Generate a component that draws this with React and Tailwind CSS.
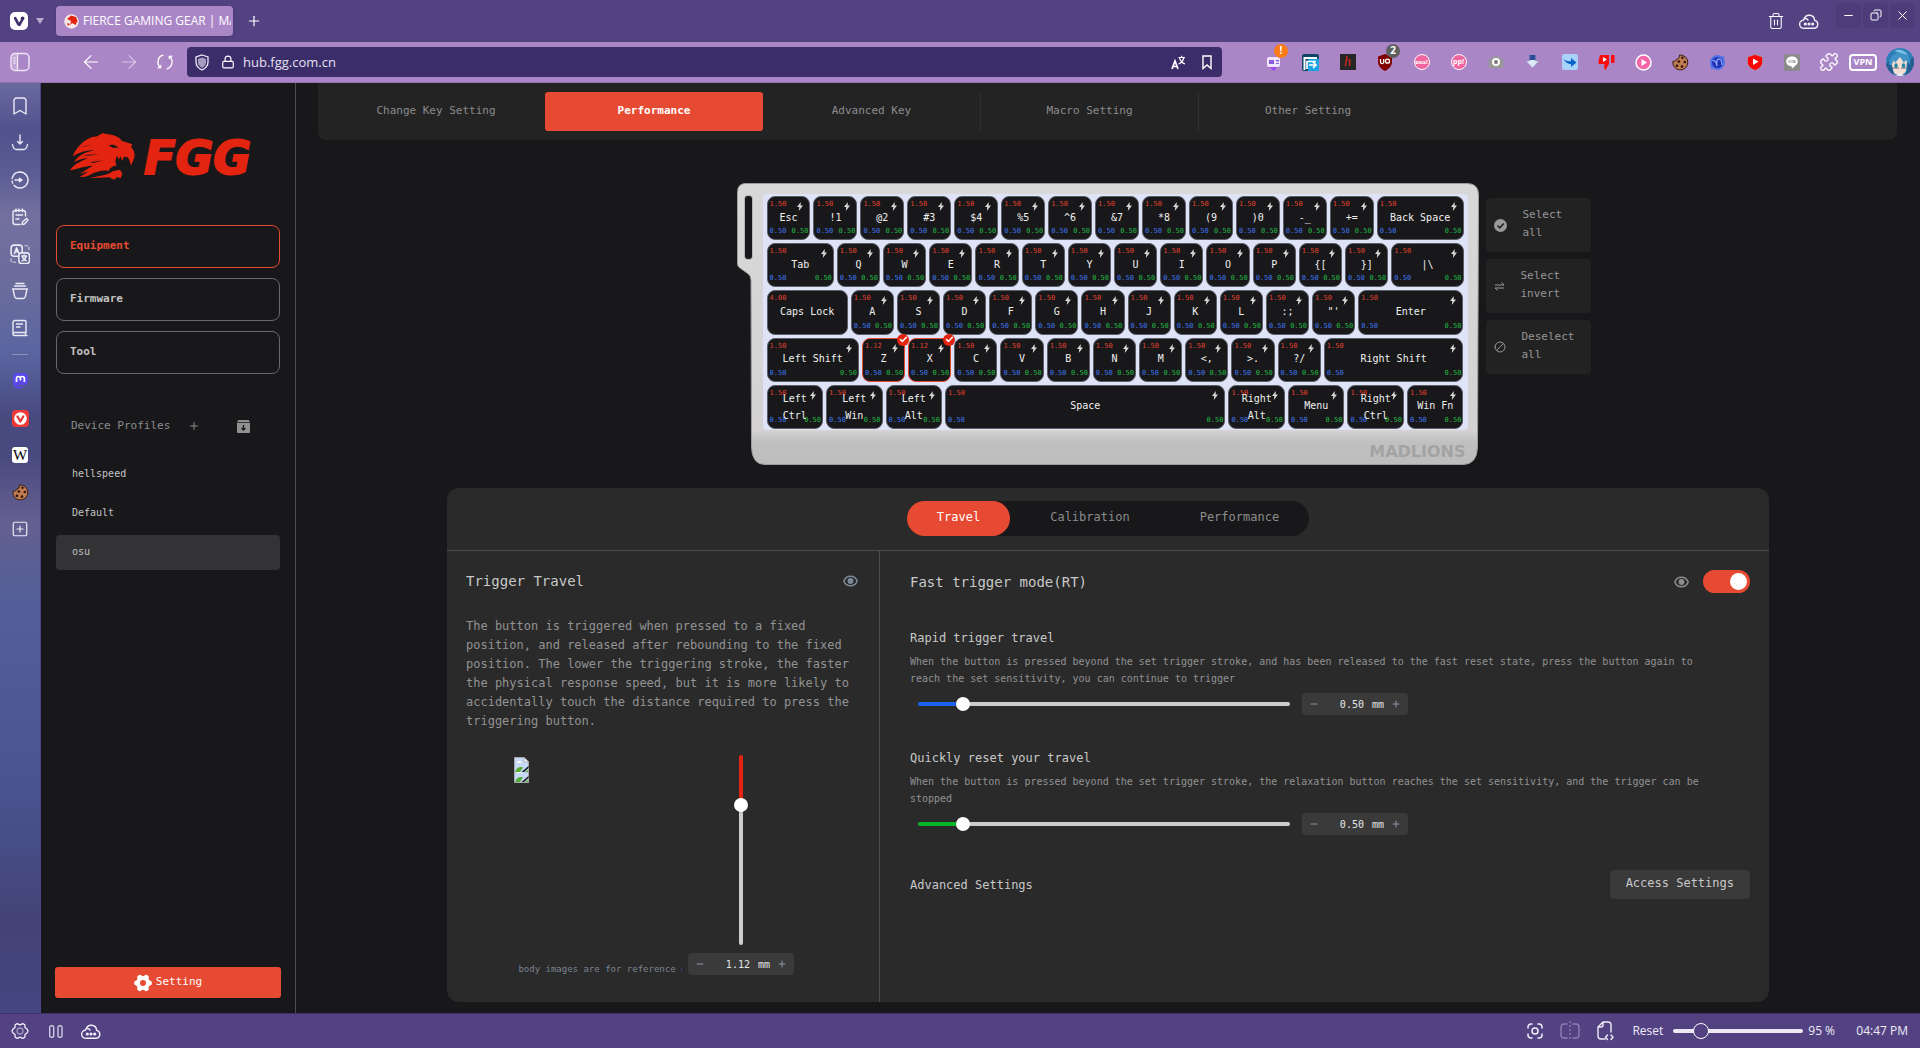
import React from "react";
import {
  Trash2, Plus, Minus, ArrowLeft, ArrowRight, X, Copy, Lock, Bookmark,
  Puzzle, Camera, Check, Ban, SquarePlus,
} from "lucide-react";

const mono = "font-['DejaVu_Sans_Mono',monospace]";

/* ---------- small drawings ---------- */

function VivaldiMark({ bg, fg, size = 18 }) {
  return (
    <svg width={size} height={size} viewBox="0 0 18 18" aria-hidden="true">
      <rect width="18" height="18" rx="5" fill={bg} />
      <path d="M5.2 6.2 8.3 12.2Q9 13.4 9.8 12.2L12.6 7" fill="none" stroke={fg} strokeWidth="2.6" strokeLinecap="round" strokeLinejoin="round" />
      <circle cx="12.6" cy="6.2" r="1.8" fill={fg} />
    </svg>
  );
}

function Cloud() {
  return (
    <svg width="20" height="18" viewBox="0 0 20 18" fill="none" stroke="#f1eefa" strokeWidth="1.4" aria-hidden="true">
      <path d="M5 16.3h10a4 4 0 0 0 .6-7.9A5.4 5.4 0 0 0 5.2 6.6a5 5 0 0 0-.9 1.7A4 4 0 0 0 5 16.3Z" strokeLinejoin="round" />
      <path d="M5.2 6.8c1.4-.5 3 0 3.800 1.200" strokeLinecap="round" />
      <circle cx="6.300" cy="12" r=".9" fill="#fff" /><circle cx="10" cy="12" r=".9" fill="#fff" /><circle cx="13.700" cy="12" r=".9" fill="#fff" />
    </svg>
  );
}

function PanelIcon() {
  return (
    <svg width="20" height="20" viewBox="0 0 20 20" fill="none" stroke="#efe6f7" strokeWidth="1.4" aria-hidden="true">
      <rect x="1" y="1.500" width="18" height="17" rx="4" />
      <path d="M7.500 1.500v17M3.500 6h2M3.500 8.500h2M3.500 11h2" />
      <rect x="1.500" y="2" width="6" height="16" rx="3" fill="#fff" fillOpacity=".25" stroke="none" />
    </svg>
  );
}

function Reload() {
  return (
    <svg width="18" height="18" viewBox="0 0 18 18" fill="none" stroke="#fff" strokeWidth="1.300" strokeLinecap="round" aria-hidden="true">
      <path d="M7 2.200A7 7 0 0 0 4.600 14.400M11 15.800A7 7 0 0 0 13.400 3.600" />
      <path d="M1.800 15H5v-2.800ZM16.200 3H13v2.800Z" fill="#fff" strokeWidth=".6" strokeLinejoin="round" />
    </svg>
  );
}

function TranslateIcon() {
  return (
    <svg width="15" height="15" viewBox="0 0 15 15" fill="none" stroke="#fff" aria-hidden="true">
      <path d="M1 14 4 6l3 8M2 11.500h4" strokeWidth="1.700" />
      <path d="M7.500 2.500H14M10.700.8v1.700M12.800 3C12 6 10 8 7.600 9M8.600 3c.8 3 2.600 5 5.400 6" strokeWidth="1.200" />
    </svg>
  );
}

function CogOutline() {
  return (
    <svg width="18" height="18" viewBox="0 0 18 18" fill="none" stroke="#f1eefa" strokeWidth="1.300" strokeLinejoin="round" aria-hidden="true">
      <path d="M6.200 1.600 9 2.800l2.800-1.200 2 1.200.2 2.700L16 7l1 2-1 2-2 1.500-.2 2.700-2 1.200L9 15.200l-2.800 1.200-2-1.200-.2-2.700L2 11 1 9l1-2 2-1.500.2-2.700Z" />
      <circle cx="9" cy="9" r="3" opacity=".5" />
    </svg>
  );
}

function CogSolid() {
  return (
    <svg width="18" height="18" viewBox="0 0 18 18" aria-hidden="true">
      <circle cx="9" cy="9" r="5" fill="none" stroke="#fff" strokeWidth="4" />
      {[0, 60, 120, 180, 240, 300].map((a) => (
        <circle key={a} cx="15.400" cy="9" r="2.500" fill="#fff" transform={`rotate(${a} 9 9)`} />
      ))}
    </svg>
  );
}

function Eye({ color }) {
  return (
    <svg width="15" height="12" viewBox="0 0 15 12" aria-hidden="true">
      <path d="M.8 6C2 3 4.500 1.200 7.500 1.200S13 3 14.200 6C13 9 10.500 10.800 7.500 10.800S2 9 .8 6Z" fill="none" stroke={color} strokeWidth="1.500" />
      <circle cx="7.500" cy="6" r="2.900" fill={color} />
    </svg>
  );
}

function Bolt() {
  return (
    <svg width="6" height="9" viewBox="0 0 6 9" aria-hidden="true">
      <path d="M3.800 0 0 5h2.300L1.800 9 6 3.600H3.600Z" fill="#d8d8d8" />
    </svg>
  );
}

function CookieIcon() {
  return (
    <svg width="17" height="17" viewBox="0 0 17 17" aria-hidden="true">
      <path d="M7.500 1a7.500 7.500 0 1 1-6.600 6.300c2 .4 3.200-.3 3.400-2.100C6.400 5.300 7.500 4 7.500 1Z" fill="#c07c4e" stroke="#3a2018" strokeWidth="1" />
      <circle cx="10.500" cy="3.800" r="1.200" fill="#2a1610" /><circle cx="6.800" cy="7.600" r="1.300" fill="#2a1610" />
      <circle cx="12.800" cy="8" r="1.300" fill="#2a1610" /><circle cx="5" cy="11.800" r="1.300" fill="#2a1610" /><circle cx="10" cy="12.600" r="1.300" fill="#2a1610" />
    </svg>
  );
}

function BrokenImage() {
  return (
    <svg width="15" height="16" viewBox="0 0 15 16" className="block shrink-0" aria-hidden="true">
      <path d="M.5.500H10L14.500 5V15.500H.5Z" fill="#c6d9f7" stroke="#a5a8ad" />
      <path d="M10 .500V5h4.500Z" fill="#fff" stroke="#a5a8ad" strokeWidth=".8" />
      <path d="M3 6c0-1.500 1-2 2-1.700C6 3.500 7.500 4.500 7.500 6Z" fill="#fff" />
      <path d="M1 15c1-4 5-6 8-4.500L6 15Z" fill="#56ab35" />
      <path d="m7.500 15 7-6v2L10 15Z" fill="#17181a" />
      <path d="M11 15l3-2v2Z" fill="#56ab35" />
    </svg>
  );
}

function Logo() {
  return (
    <svg width="193" height="50" viewBox="0 0 193 50" role="img" aria-label="FGG">
      <g transform="translate(-10 -7) scale(.3333)" fill="#e22410">
        <path d="M38 94C48 70 66 48 96 36L112 34 128 24 138 27C160 28 178 36 186 48L206 54 217 58 213 66C224 76 227 92 220 106L213 122 209 108C207 98 198 93 191 97L187 108 181 94 177 104 171 92 166 108 169 122C158 122 150 128 146 138C130 134 112 140 96 146 88 152 70 158 60 155L84 140C76 141 68 144 58 147L98 122C82 122 58 130 30 136C42 118 62 108 84 100 68 100 56 104 42 112 56 88 78 82 104 76 84 74 60 80 38 94Z" />
        <path d="M88 160 122 152C138 150 148 146 160 138L180 134 187 146 182 160 172 156 162 164 148 157 118 158Z" />
        <path d="M146 60 162 59 176 68 158 68Z" fill="#18181a" />
        <path d="M62 66 96 58 76 64ZM70 90 118 88 84 92ZM90 112 130 106 100 114Z" fill="#18181a" />
        <path d="m180 122 6-12 4 12 10-14-2 20-8 12-8-4Z" fill="#18181a" />
      </g>
      <text x="74" y="42" fontFamily="DejaVu Sans" fontWeight="700" fontStyle="italic" fontSize="46" fill="#e22410" stroke="#e22410" strokeWidth="2">FGG</text>
    </svg>
  );
}

/* ---------- browser frame ---------- */

function TabStrip() {
  return (
    <header className="flex h-[42px] shrink-0 items-center bg-[#524282] pl-[10px] font-['Open_Sans',sans-serif]">
      <button aria-label="Menu" className="flex items-center gap-2">
        <VivaldiMark bg="#fff" fg="#3a2d6a" />
        <svg width="8" height="6" viewBox="0 0 8 6"><path d="M0 0h8L4 6Z" fill="#b5abd1" /></svg>
      </button>
      <button className="ml-3 flex h-[30px] w-[177px] items-center gap-1 rounded bg-[#ab86c7] pl-2 pr-[2px] text-xs text-white shadow">
        <svg width="15" height="15" viewBox="0 0 15 15" className="shrink-0">
          <circle cx="7.500" cy="7.500" r="7.200" fill="#f6e8e8" />
          <path d="M7 1.500 12 3l1.500 4-2 4L8 9 6 11 7 7 3 5Z" fill="#e22410" />
          <path d="M3 9l3 1-2 2Z" fill="#e22410" />
        </svg>
        <span className="overflow-hidden whitespace-nowrap">FIERCE GAMING GEAR | MA</span>
      </button>
      <button aria-label="New tab" className="ml-[13px] text-white"><Plus size={16} strokeWidth={1.8} /></button>
      <div className="ml-auto flex items-center gap-[14px] pr-[5px] text-white">
        <button aria-label="Closed tabs"><Trash2 size={18} strokeWidth={1.4} /></button>
        <button aria-label="Synced tabs"><Cloud /></button>
        <div className="mb-3 ml-[3px] flex gap-[2px]">
          <button aria-label="Minimize" className="flex size-[25px] items-center justify-center rounded bg-[#4c3d7a]"><Minus size={13} strokeWidth={2} /></button>
          <button aria-label="Restore" className="flex size-[25px] items-center justify-center rounded bg-[#4c3d7a]"><Copy size={12} strokeWidth={2} className="-scale-x-100" /></button>
          <button aria-label="Close" className="flex size-[25px] items-center justify-center rounded bg-[#4c3d7a]"><X size={15} strokeWidth={1.6} /></button>
        </div>
      </div>
    </header>
  );
}

function Ext({ label, children }) {
  return <button aria-label={label} className="relative flex size-[17px] items-center justify-center">{children}</button>;
}

function Extensions() {
  return (
    <div className="flex items-center gap-5">
      <Ext label="Video helper">
        <svg width="17" height="17" viewBox="0 0 17 17">
          <rect x="2" y="3" width="13" height="10" rx="2" fill="#f1e6ff" /><path d="M4 13h8l-3 4Z" fill="#9a4cf0" />
          <rect x="4" y="6" width="5" height="4" fill="#8d5be0" /><path d="M11 6h3v1.500h-3ZM11 9h3v1h-3Z" fill="#8d5be0" />
        </svg>
        <span className="absolute -top-[10px] left-[9px] flex size-[14px] items-center justify-center rounded-full bg-[#f97b16] text-[10px] font-bold text-white">!</span>
      </Ext>
      <Ext label="Tab forwarder">
        <svg width="17" height="17" viewBox="0 0 17 17"><rect width="17" height="17" rx="2" fill="#0d4468" /><path d="M6 17V5h11v12Z" fill="#19a5e0" /><path d="M2.500 16V4H15" stroke="#fff" strokeWidth="2" fill="none" /><path d="M5 15V7.500h9M7 11h7m-3-3 3 3-3 3" stroke="#fff" strokeWidth="1.700" fill="none" /></svg>
      </Ext>
      <Ext label="Hypothesis">
        <span className="flex size-4 items-center justify-center bg-[#262626] font-['Liberation_Serif',serif] text-sm italic text-[#e0261f]">h</span>
      </Ext>
      <Ext label="Content blocker">
        <svg width="16" height="17" viewBox="0 0 16 17"><path d="M8 0 15 2.500V8c0 4-3 7-7 9-4-2-7-5-7-9V2.500Z" fill="#800000" /><path d="M3.500 5v3a1.600 1.600 0 0 0 3.200 0V5" stroke="#fff" strokeWidth="1.300" fill="none" /><circle cx="10.500" cy="7.200" r="2" stroke="#fff" strokeWidth="1.300" fill="none" /></svg>
        <span className="absolute -top-[10px] left-[10px] flex size-[14px] items-center justify-center rounded-full bg-[#5f5f5f] text-[10px] font-bold text-white">2</span>
      </Ext>
      <Ext label="osu! stats"><span className="flex size-4 shrink-0 items-center justify-center rounded-full border border-white bg-[#f0659f] text-[6px] font-bold text-white">osu!</span></Ext>
      <Ext label="pp counter"><span className="flex size-4 shrink-0 items-center justify-center rounded-full border border-white bg-[#f0659f] text-[7px] font-bold text-white">pp!</span></Ext>
      <Ext label="Screenshot"><Camera size={16} fill="#979797" stroke="#979797" /><span className="absolute size-2 rounded-full border-2 border-white bg-[#777]" /></Ext>
      <Ext label="Downloader">
        <svg width="13" height="14" viewBox="0 0 13 14"><path d="M3.500 0h6v6H13L6.500 13 0 6h3.500Z" fill="#dfe8f5" stroke="#8a93b5" strokeWidth=".6" /><path d="M3.500 0h6v5h-6Z" fill="#2c4a9a" /></svg>
      </Ext>
      <Ext label="Redirector">
        <svg width="16" height="16" viewBox="0 0 16 16"><rect width="16" height="16" rx="2" fill="#a9d2fb" /><path d="M2 5c2 2 4 2.500 7 2V4l5.500 4.500L9 13v-3C6 10 3 8.500 2 5Z" fill="#0a63c9" /></svg>
      </Ext>
      <Ext label="Dislike counter">
        <svg width="17" height="16" viewBox="0 0 17 16"><path d="M2 1h9v9L7.500 16Q5.500 15 6.500 10H0.500Q0 8 2 1ZM13 1h3.500v8H13Z" fill="#fb0d0d" /><path d="m5 3 4 2.500L5 8Z" fill="#fff" /></svg>
      </Ext>
      <Ext label="Player">
        <svg width="17" height="17" viewBox="0 0 17 17"><circle cx="8.500" cy="8.500" r="7.500" fill="#f566a8" stroke="#fff" strokeWidth="1.500" /><path d="m6.500 5 5.500 3.500L6.500 12Z" fill="#fff" /></svg>
      </Ext>
      <Ext label="Cookies"><CookieIcon /></Ext>
      <Ext label="Violentmonkey">
        <svg width="17" height="17" viewBox="0 0 17 17"><circle cx="8.500" cy="8.500" r="6.500" fill="#2230b8" stroke="#4f74e3" strokeWidth="2" /><path d="M3.500 7q3-2 4.500 5M8 12q-1-7 2-7t3 6" stroke="#8aa6f5" strokeWidth="1.300" fill="none" /><path d="M14 1.500l2 3-3.500.5ZM3 15.500l-2-3 3.500-.5Z" fill="#4f74e3" /></svg>
      </Ext>
      <Ext label="Sponsor blocker">
        <svg width="16" height="17" viewBox="0 0 16 17"><path d="M8 .5 15.500 3v5c0 4-3.500 7-7.500 8.500C4 15 .5 12 .5 8V3Z" fill="#f80505" stroke="#a9a9a9" strokeWidth=".6" /><path d="m6 4.500 5.500 3.200L6 11Z" fill="#fff" /></svg>
      </Ext>
      <Ext label="LINE">
        <svg width="16" height="17" viewBox="0 0 16 17"><rect width="16" height="17" rx="2" fill="#8a8a8a" /><path d="M8 2.500c3.300 0 5.800 2 5.800 4.900 0 2.500-2 4.100-5.800 7-.3-1 0-1.800-.8-2.100C4 12 2.200 10 2.200 7.400 2.200 4.500 4.700 2.500 8 2.500Z" fill="#fff" /><path d="M5 6v3M7 6v3M9 9V6l2 3V6" stroke="#8a8a8a" strokeWidth=".8" fill="none" /></svg>
      </Ext>
      <Ext label="Extensions"><Puzzle size={20} strokeWidth={1.6} className="shrink-0 text-white" /></Ext>
    </div>
  );
}

function AddressBar() {
  return (
    <div className="flex h-[41px] shrink-0 items-center border-b border-[#9471b3] bg-[#ab86c7] pl-[10px] pr-[6px] font-['Open_Sans',sans-serif]">
      <button aria-label="Panel"><PanelIcon /></button>
      <button aria-label="Back" className="ml-[50px] text-white"><ArrowLeft size={22} strokeWidth={1.300} /></button>
      <button aria-label="Forward" className="ml-4 text-white/50"><ArrowRight size={22} strokeWidth={1.300} /></button>
      <button aria-label="Reload" className="ml-4"><Reload /></button>
      <div className="ml-[13px] flex h-[30px] flex-1 items-center rounded bg-[#3a2d6a] px-2 text-white">
        <svg width="14" height="17" viewBox="0 0 14 17"><path d="M7 1 13 3v5c0 4-3 6.500-6 8-3-1.500-6-4-6-8V3Z" fill="none" stroke="#efecf7" strokeWidth="1.300" /><path d="M7 3.500 11 5v3.500c0 2-1.500 4-4 5.500-2.500-1.500-4-3.500-4-5.500V5Z" fill="#a49dc1" /></svg>
        <Lock size={14} strokeWidth={2} className="ml-[12px]" />
        <input aria-label="Address" defaultValue="hub.fgg.com.cn" className="ml-2 min-w-0 flex-1 bg-transparent pt-px text-[13px] text-[#e4e0f0] outline-none" />
        <TranslateIcon />
        <svg width="10" height="15" viewBox="0 0 10 15" className="ml-4 mr-[2px]"><path d="M1 1h8v12.500L5 10l-4 3.500Z" fill="none" stroke="#fff" strokeWidth="1.400" /></svg>
      </div>
      <div className="ml-[43px]"><Extensions /></div>
      <button className="ml-3 flex h-[17px] w-7 items-center justify-center rounded border-2 border-white text-[9px] font-bold text-white">VPN</button>
      <button aria-label="Profile" className="ml-[9px]">
        <svg width="28" height="28" viewBox="0 0 28 28">
          <defs><clipPath id="av"><circle cx="14" cy="14" r="14" /></clipPath></defs>
          <g clipPath="url(#av)">
            <rect width="28" height="28" fill="#2d7fb8" />
            <path d="M5 13c3-1 6-4 9-5 2 3 5 4 7 5l-1 10c-2 5-10 5-13 1Z" fill="#f4ddd2" />
            <path d="M0 28V16l5-4 2 10 2 6ZM28 28V8l-6 6-1 9-2 5Z" fill="#245f8f" />
            <path d="M3 16C4 8 9 5 13 4c6-1 12 3 11 13l-4-6-2 4-4-6-5 6-1-3-3 6Z" fill="#3f93c6" />
            <path d="M8 3q8-4 14 4l-4-1Z" fill="#7cc0e2" />
            <ellipse cx="10" cy="17.500" rx="1.700" ry="2.200" fill="#1f86a8" /><ellipse cx="17.500" cy="17.500" rx="1.700" ry="2.200" fill="#1f86a8" />
            <path d="M7 20h6M15 20h5" stroke="#444b5a" strokeWidth=".8" />
            <path d="M9 28l5-3 5 3Z" fill="#e9eef5" />
          </g>
        </svg>
      </button>
    </div>
  );
}

function PanelStrip() {
  const s = { width: 18, height: 18, viewBox: "0 0 18 18", fill: "none", stroke: "#eceaf6", strokeWidth: 1.4, strokeLinecap: "round", strokeLinejoin: "round" };
  const items = [
    ["Bookmarks", <svg {...s}><path d="M3 3.500A2.500 2.500 0 0 1 5.500 1h7A2.500 2.500 0 0 1 15 3.500V17l-6-3.500L3 17Z" /></svg>],
    ["Downloads", <svg {...s}><path d="M9 1v9M6.500 7.500 9 10l2.500-2.500M1.500 10.500c.5 3 2 5 4 5h7c2 0 3.500-2 4-5" /></svg>],
    ["History", <svg {...s}><path d="M9 1a8 8 0 1 1-4.500 14.600" /><path d="M4.500 15.600A8 8 0 0 1 9 1" strokeDasharray="2 2.500 2 2.500 20" /><path d="M4 9h7M8.500 7.300 11 9l-2.500 1.700Z" /></svg>],
    ["Notes", <svg {...s}><path d="M14.500 8V5A2.500 2.500 0 0 0 12 2.500H4.500A2.500 2.500 0 0 0 2 5v9a2.500 2.500 0 0 0 2.500 2.500H9M5 1v2.500M8 1v2.500M11.500 1v2.500M5 7h6.500M5 11h3M11 16.500l.5-2.500 4-3.500 1.500 1.500-3.500 4Z" /></svg>],
    ["Translate", <svg {...s} width="20" height="20" className="shrink-0"><rect x="1" y="1" width="10" height="10" rx="2.500" /><path d="M4 8.500 6 3.500l2 5M4.700 7h2.600" /><rect x="8" y="8" width="9.500" height="9.500" rx="2.500" fill="#5d6093" /><path d="M10.500 10.800h4.500M12.700 10v1M14.500 11c-.5 2-2 3.500-3.700 4.200M11.300 12c.7 1.500 2 2.500 3.300 3.200" /><path d="M13.500 1.500h2A1.500 1.500 0 0 1 17 3v2.500M1 13.500V15a1.500 1.500 0 0 0 1.500 1.500H5" strokeDasharray="2 2" opacity=".6" /></svg>],
    ["Sessions", <svg {...s}><path d="M5 1.500h8M3.500 4h11M1.500 7h15M2 7l1.500 7a3 3 0 0 0 3 2.500h5a3 3 0 0 0 3-2.500L16 7" /></svg>],
    ["Reading list", <svg {...s}><path d="M2 14.500V3.500A2 2 0 0 1 4 1.500h9.500A1.500 1.500 0 0 1 15 3v10.500H4a2 2 0 0 0-2 2M2 15a1.500 1.500 0 0 0 1.500 1.500H16M14.500 14v2.500M5.500 5h6M5.500 8h3.500" /></svg>],
  ];
  return (
    <nav aria-label="Panels" className="flex w-[41px] shrink-0 flex-col items-center gap-[19px] border-r border-[#4a4680] bg-[linear-gradient(#6a6aa0_0,#50528c_5%,#5b5d94_10%,#73709f_14%,#6a6c9c_22%,#5a65a0_29%,#47497f_36%,#48497f_40%,#655f90_47%,#525f98_56%,#4a5590_75%,#434378_90%,#454680_100%)] pt-[14px]">
      {items.map(([label, icon]) => (
        <button key={label} aria-label={label} className="flex size-[18px] items-center justify-center">{icon}</button>
      ))}
      <hr className="-my-[2px] h-px w-4 border-0 bg-[#8f8fba]" />
      <button aria-label="Mastodon" className="flex size-[18px] items-center justify-center">
        <svg width="15" height="16" viewBox="0 0 15 16"><path d="M3 0h9q3 0 3 3.500V8q0 4-4 4H5q0 2 5 1.500V15q-7 2-9-2Q0 11 0 4 0 0 3 0Z" fill="#5c48e8" /><path d="M3.500 9V5.500Q3.500 3.500 5.400 3.500T7.400 5.500V7.500 5.500Q7.400 3.500 9.400 3.500t2 2V9" stroke="#fff" strokeWidth="1.700" fill="none" /></svg>
      </button>
      <button aria-label="Vivaldi" className="flex size-[18px] items-center justify-center">
        <svg width="17" height="17" viewBox="0 0 17 17"><rect width="17" height="17" rx="4" fill="#ef3939" /><circle cx="8.500" cy="8.500" r="6.300" fill="#fff" /><path d="m5.500 6.500 2.800 5 2.900-5" stroke="#e33" strokeWidth="2.200" fill="none" strokeLinecap="round" strokeLinejoin="round" /></svg>
      </button>
      <button aria-label="Wikipedia" className="flex size-[18px] items-center justify-center"><span className="flex size-4 items-center justify-center rounded-[3px] bg-white font-['Liberation_Serif',serif] text-[15px] text-black">W</span></button>
      <button aria-label="Cookie panel" className="flex size-[18px] items-center justify-center"><CookieIcon /></button>
      <button aria-label="Add web panel" className="flex size-[18px] items-center justify-center text-[#eceaf6]"><SquarePlus size={18} strokeWidth={1.600} /></button>
    </nav>
  );
}

function StatusBar() {
  return (
    <footer className="flex h-[35px] shrink-0 items-center border-t border-[#3d2f6c] bg-[#524282] pl-[11px] pr-3 font-['Open_Sans',sans-serif] text-xs text-[#efecf7]">
      <button aria-label="Settings"><CogOutline /></button>
      <button aria-label="Pause" className="ml-5">
        <svg width="14" height="13" viewBox="0 0 14 13" fill="none" stroke="#d0c9e4" strokeWidth="1.400"><rect x=".7" y=".7" width="4" height="11.600" rx="1.500" /><rect x="9" y=".7" width="4" height="11.600" rx="1.500" /></svg>
      </button>
      <button aria-label="Sync" className="ml-[18px]"><Cloud /></button>
      <div className="ml-auto flex items-center">
        <button aria-label="Capture page">
          <svg width="16" height="16" viewBox="0 0 16 16" fill="none" stroke="#efecf7" strokeWidth="1.500" strokeLinecap="round"><path d="M1 5V4a3 3 0 0 1 3-3h1M11 1h1a3 3 0 0 1 3 3v1M15 11v1a3 3 0 0 1-3 3h-1M5 15H4a3 3 0 0 1-3-3v-1" /><circle cx="8" cy="8" r="3" /></svg>
        </button>
        <button aria-label="Tile tabs" className="ml-[17px]">
          <svg width="20" height="20" viewBox="0 0 20 20" fill="none" stroke="#8d80b3" strokeWidth="1.400"><path d="M7.500 3H4a3 3 0 0 0-3 3v8a3 3 0 0 0 3 3h3.500M12.500 3H16a3 3 0 0 1 3 3v8a3 3 0 0 1-3 3h-3.500" /><path d="M10 0v20" strokeDasharray="2 2" /></svg>
        </button>
        <button aria-label="Page actions" className="ml-[17px]">
          <svg width="17" height="20" viewBox="0 0 17 20" fill="none" stroke="#efecf7" strokeWidth="1.400" strokeLinecap="round" strokeLinejoin="round"><path d="M8 18H4a3 3 0 0 1-3-3V6l5-5h5a3 3 0 0 1 3 3v7M6 1v3a2 2 0 0 1-2 2H1" /><path d="m10.500 14-2 2.200 2 2.300M14 14l2 2.200-2 2.300" /></svg>
        </button>
        <button className="ml-[18px]">Reset</button>
        <input type="range" aria-label="Page zoom" min="20" max="500" defaultValue="102"
          className="ml-[10px] h-1 w-[130px] appearance-none rounded-full bg-[#ece9f4] [&::-webkit-slider-thumb]:size-4 [&::-webkit-slider-thumb]:appearance-none [&::-webkit-slider-thumb]:rounded-full [&::-webkit-slider-thumb]:border [&::-webkit-slider-thumb]:border-white [&::-webkit-slider-thumb]:bg-[#524282]" />
        <span className="ml-[5px] w-12">95 %</span>
        <span>04:47 PM</span>
      </div>
    </footer>
  );
}

/* ---------- device hub ---------- */

function Sidebar() {
  return (
    <aside className="flex w-[255px] shrink-0 flex-col border-r border-[#4c4c4e] px-[14px] text-[11px] text-[#c2c2c2]">
      <div className="mt-[49px] px-[15px]"><Logo /></div>
      <nav className="mx-px mt-[43px] flex flex-col gap-[10px] font-bold">
        <button className="h-[43px] rounded-lg border border-[#e64a33] px-[13px] text-left text-[#e64a33]">Equipment</button>
        <button className="h-[43px] rounded-lg border border-[#6a6a6c] px-[13px] text-left">Firmware</button>
        <button className="h-[43px] rounded-lg border border-[#6a6a6c] px-[13px] text-left">Tool</button>
      </nav>
      <div className="mt-11 flex items-center px-4 text-[#8c8c8d]">
        <h2>Device Profiles</h2>
        <button aria-label="Add profile" className="ml-[18px]"><Plus size={12} strokeWidth={2} /></button>
        <button aria-label="Import profile" className="ml-auto mr-[15px]">
          <svg width="13" height="13" viewBox="0 0 13 13"><path d="M1.500 0h10L13 2H0ZM0 2.700h13V12a1 1 0 0 1-1 1H1a1 1 0 0 1-1-1Z" fill="#919192" /><path d="M6.500 5v5M4.500 8l2 2 2-2" stroke="#18181a" strokeWidth="1.300" fill="none" /></svg>
        </button>
      </div>
      <ul className="mx-px mt-[22px] flex flex-col gap-1 text-[10px]">
        {["hellspeed", "Default", "osu"].map((p) => (
          <li key={p}>
            <button className={`h-[35px] w-full rounded px-4 pb-[2px] text-left ${p === "osu" ? "bg-[#333335]" : ""}`}>{p}</button>
          </li>
        ))}
      </ul>
      <button className="mb-[15px] mt-auto flex h-[31px] items-center justify-center gap-1 rounded-[3px] bg-[#e64a33] text-white">
        <CogSolid /><span>Setting</span>
      </button>
    </aside>
  );
}

const rows = [
  [["Esc", 44], ["!1", 44], ["@2", 44], ["#3", 44], ["$4", 44], ["%5", 44], ["^6", 44], ["&7", 44], ["*8", 44], ["(9", 44], [")0", 44], ["-_", 44], ["+=", 44], ["Back Space", 87]],
  [["Tab", 67], ["Q", 43], ["W", 43], ["E", 43], ["R", 43], ["T", 43], ["Y", 43], ["U", 43], ["I", 43], ["O", 43], ["P", 43], ["{[", 43], ["}]", 43], ["|\\", 72]],
  [["Caps Lock", 81], ["A", 43], ["S", 43], ["D", 43], ["F", 43], ["G", 43], ["H", 43], ["J", 43], ["K", 43], ["L", 43], [":;", 43], ["\"'", 43], ["Enter", 105]],
  [["Left Shift", 92], ["Z", 43], ["X", 43], ["C", 43], ["V", 43], ["B", 43], ["N", 43], ["M", 43], ["<,", 43], [">.", 43], ["?/", 43], ["Right Shift", 139]],
  [["Left Ctrl", 57], ["Left Win", 57], ["Left Alt", 57], ["Space", 283], ["Right Alt", 57], ["Menu", 57], ["Right Ctrl", 57], ["Win Fn", 57]],
];

function Key({ label, units }) {
  const selected = label === "Z" || label === "X";
  const caps = label === "Caps Lock";
  const stacked = /^(Left|Right) (Ctrl|Win|Alt)$/.test(label);
  /* the border already takes two of the units */
  return (
    <button
      style={{ flexGrow: units - 2 }}
      className={`relative flex min-w-0 basis-0 items-center justify-center rounded-lg border bg-[#18181a] text-[10px] text-[#f0f0f0] ${selected ? "border-[#e64a33]" : "border-[#5b5e66]"}`}
    >
      <span className="absolute left-[2px] top-[3px] text-[7px] leading-[8px] text-[#e0402d]">{caps ? "4.00" : selected ? "1.12" : "1.50"}</span>
      {!caps && (
        <>
          <span className="absolute right-[6px] top-[5px]"><Bolt /></span>
          <span className="absolute bottom-[4px] left-[2px] text-[7px] leading-[8px] text-[#3f74ee]">0.50</span>
          <span className="absolute bottom-[4px] right-[1px] text-[7px] leading-[8px] text-[#22b544]">0.50</span>
        </>
      )}
      <span className={`relative ${stacked ? "w-9 leading-[17px]" : "whitespace-nowrap pb-[2px]"}`}>{label}</span>
      {selected && (
        <span className="absolute -right-[5px] -top-[5px] z-10 flex size-3 items-center justify-center rounded-full bg-[#e22410] text-white"><Check size={9} strokeWidth={4} /></span>
      )}
    </button>
  );
}

function Keyboard() {
  return (
    <section aria-label="Keyboard" className="relative h-[282px] w-[742px] pl-[26px] pr-[11px] pt-[11px]">
      <svg className="absolute inset-0" width="742" height="282" viewBox="0 0 742 282" aria-hidden="true">
        <defs>
          <linearGradient id="case" x1="0" y1="0" x2="0" y2="1">
            <stop offset="0" stopColor="#d8d8d8" /><stop offset=".88" stopColor="#d4d2d3" /><stop offset=".92" stopColor="#c0c0c0" /><stop offset="1" stopColor="#bdbdbd" />
          </linearGradient>
        </defs>
        <path d="M9 .5H730Q741.500 .5 741.500 12L740.500 264Q740 281.500 726 281.500H28Q15 281.500 14.500 264L14 97Q14 92 10 90L3 85Q.5 84 .5 80V9Q.5 .5 9 .5Z" fill="url(#case)" stroke="#9d9d9f" strokeWidth="1" />
        <rect x="8" y="13" width="7" height="63" rx="3" fill="#18181a" stroke="#b5b5b7" strokeWidth="2" paintOrder="stroke" />
      </svg>
      <div className="relative flex h-[236px] flex-col gap-[3px] rounded bg-[#dfe3f8] px-1 pb-px pt-[2px]">
        {rows.map((r, i) => (
          <div key={i} className="flex flex-1 gap-[3px]">
            {r.map(([label, units]) => <Key key={label} label={label} units={units} />)}
          </div>
        ))}
      </div>
      <p className="relative pr-[2px] pt-3 text-right font-['DejaVu_Sans',sans-serif] text-[16px] font-bold leading-[20px] text-[#a3a3a3]">MADLIONS</p>
    </section>
  );
}

function SelectButtons() {
  return (
    <div className="ml-[7px] mt-[15px] flex w-[105px] flex-col gap-[7px] text-[11px] text-[#959596]">
      <button className="flex h-[54px] items-center gap-4 rounded-sm bg-[#222223] px-2 text-left leading-[18px]">
        <svg width="13" height="13" viewBox="0 0 13 13" className="shrink-0"><circle cx="6.500" cy="6.500" r="6.500" fill="#9a9a9b" /><path d="m3.500 6.500 2.300 2.300 4-4.300" stroke="#222223" strokeWidth="1.500" fill="none" /></svg>
        <span className="w-12 pb-[2px]">Select all</span>
      </button>
      <button className="flex h-[54px] items-center gap-4 rounded-sm bg-[#222223] px-2 text-left leading-[18px]">
        <svg width="11" height="13" viewBox="0 0 11 13" className="shrink-0" fill="none" stroke="#9a9a9b" strokeWidth="1"><path d="M1 5h9L7.500 2.500M10 8H1l2.500 2.500" /></svg>
        <span className="w-12 pb-[2px]">Select invert</span>
      </button>
      <button className="flex h-[54px] items-center gap-4 rounded-sm bg-[#222223] px-2 text-left leading-[18px]">
        <Ban size={12} strokeWidth={2} className="shrink-0 -scale-x-100" />
        <span className="w-14 pb-[2px]">Deselect all</span>
      </button>
    </div>
  );
}

function Stepper({ label, value }) {
  return (
    <div className="flex h-[22px] w-[106px] shrink-0 items-center rounded-sm bg-[#3a3a3b] px-[7px] text-[10px] text-[#e6e6e6]">
      <button aria-label={`Decrease ${label}`} className="text-[#8b95a3]"><Minus size={10} strokeWidth={2.500} /></button>
      <input aria-label={label} defaultValue={value} className="min-w-0 flex-1 bg-transparent text-right outline-none" />
      <span className="ml-2">mm</span>
      <button aria-label={`Increase ${label}`} className="ml-[7px] text-[#8b95a3]"><Plus size={10} strokeWidth={2.500} /></button>
    </div>
  );
}

const thumb = "[&::-webkit-slider-thumb]:size-[14px] [&::-webkit-slider-thumb]:appearance-none [&::-webkit-slider-thumb]:rounded-full [&::-webkit-slider-thumb]:bg-white [&::-webkit-slider-thumb]:shadow";

function TravelSetting({ title, text, color, value }) {
  return (
    <section className="flex flex-col">
      <h3 className="text-xs leading-[18px] text-[#c8c8c8]">{title}</h3>
      <p className="mt-[6px] pr-10 text-[10px] leading-[17px] text-[#929293]">{text}</p>
      <div className="mt-[6px] flex items-center pl-2">
        <input type="range" aria-label={title} min="0" max="4.7" step="0.01" defaultValue={value}
          style={{ backgroundImage: `linear-gradient(to right, ${color} 12%, #cdcdcd 12%)` }}
          className={`mr-3 h-1 w-[372px] appearance-none rounded-sm ${thumb}`} />
        <Stepper label={title + " value"} value={value} />
      </div>
    </section>
  );
}

function Panel() {
  return (
    <section className="mb-[11px] ml-[129px] mr-32 mt-[23px] flex flex-1 flex-col rounded-xl bg-[#2a2a2a]">
      <div className="flex h-[63px] items-start justify-center border-b border-[#4c4c4d] pt-[13px]">
        <div className="flex gap-[10px] rounded-full bg-[#18181a] text-xs text-[#8c8c8d]">
          <button className="h-[35px] rounded-full bg-[#e64a33] px-[30px] pb-1 text-white">Travel</button>
          <button className="h-[35px] rounded-full px-[30px] pb-1">Calibration</button>
          <button className="h-[35px] rounded-full px-[30px] pb-1">Performance</button>
        </div>
      </div>
      <div className="grid flex-1 grid-cols-[433px_1fr]">
        <div className="flex flex-col border-r border-[#4c4c4d] px-[19px] pt-5">
          <div className="flex items-center justify-between pr-[2px]">
            <h2 className="text-sm text-[#c8c8c8]">Trigger Travel</h2>
            <button aria-label="Preview trigger travel"><Eye color="#7d8a9a" /></button>
          </div>
          <p className="mt-[26px] text-xs leading-[19px] text-[#929293]">
            The button is triggered when pressed to a fixed position, and released after rebounding to the fixed position. The lower the triggering stroke, the faster the physical response speed, but it is more likely to accidentally touch the distance required to press the triggering button.
          </p>
          <div className="ml-[46px] mt-6 flex gap-[6px]">
            <div className="flex w-[170px] flex-col justify-between pt-[2px]">
              <div className="pl-[2px]">
                <div className="h-[15px] overflow-hidden"><BrokenImage /></div>
                <div className="flex h-[11px] items-end overflow-hidden"><BrokenImage /></div>
              </div>
              <p className="flex justify-center overflow-hidden whitespace-nowrap text-[9px] leading-[12px] text-[#7a838f]">
                <span>s body images are for reference o</span>
              </p>
            </div>
            <div className="flex flex-col items-center gap-2">
              <input type="range" aria-label="Trigger travel" min="0" max="4.54" step="0.01" defaultValue="1.12"
                style={{ backgroundImage: "linear-gradient(to bottom, #e22410 26%, #cdcdcd 26%)" }}
                className={`h-[190px] w-1 appearance-none rounded-sm [writing-mode:vertical-lr] ${thumb}`} />
              <Stepper label="Trigger travel value" value="1.12" />
            </div>
          </div>
        </div>
        <div className="flex flex-col pl-[30px] pr-[19px] pt-[19px]">
          <div className="flex h-[23px] items-center">
            <h2 className="text-sm text-[#c8c8c8]">Fast trigger mode(RT)</h2>
            <button aria-label="Preview fast trigger" className="ml-auto mr-[14px]"><Eye color="#8d8d8e" /></button>
            <label className="relative block h-[23px] w-[47px]">
              <span className="sr-only">Fast trigger mode</span>
              <input type="checkbox" defaultChecked className="peer absolute inset-0 size-full appearance-none rounded-full bg-[#555] checked:bg-[#e64a33]" />
              <span className="pointer-events-none absolute left-[3px] top-[3px] size-[17px] rounded-full bg-white peer-checked:left-[27px]" />
            </label>
          </div>
          <div className="mt-9 flex flex-col gap-[34px]">
            <TravelSetting title="Rapid trigger travel" color="#1d62f0" value="0.50"
              text="When the button is pressed beyond the set trigger stroke, and has been released to the fast reset state, press the button again to reach the set sensitivity, you can continue to trigger" />
            <TravelSetting title="Quickly reset your travel" color="#08b52b" value="0.50"
              text="When the button is pressed beyond the set trigger stroke, the relaxation button reaches the set sensitivity, and the trigger can be stopped" />
          </div>
          <div className="mt-[35px] flex items-center justify-between text-xs text-[#c8c8c8]">
            <h3>Advanced Settings</h3>
            <button className="h-[29px] rounded bg-[#3a3a3b] px-4 pb-1">Access Settings</button>
          </div>
        </div>
      </div>
    </section>
  );
}

function Main() {
  const tabs = ["Change Key Setting", "Performance", "Advanced Key", "Macro Setting", "Other Setting"];
  return (
    <main className="flex min-w-0 flex-1 flex-col pl-[22px] pr-[23px]">
      <nav className="flex h-[57px] shrink-0 items-start rounded-b-lg bg-[#232323] pl-[9px] pt-[9px] text-[11px] text-[#8c8c8d]">
        {tabs.map((t, i) => (
          <button key={t} className={`h-[39px] w-[218px] pb-px ${i === 1 ? "rounded-[3px] bg-[#e64a33] font-bold text-white" : i === 2 || i === 3 ? "border-r border-[#303031]" : ""}`}>{t}</button>
        ))}
      </nav>
      <div className="mt-[43px] grid grid-cols-[1fr_auto_1fr] items-start">
        <div />
        <Keyboard />
        <SelectButtons />
      </div>
      <Panel />
    </main>
  );
}

export default function App() {
  return (
    <div className="flex h-screen flex-col overflow-hidden bg-[#18181a]">
      <TabStrip />
      <AddressBar />
      <div className="flex min-h-0 flex-1">
        <PanelStrip />
        <div className={`flex min-w-0 flex-1 ${mono}`}>
          <Sidebar />
          <Main />
        </div>
      </div>
      <StatusBar />
    </div>
  );
}
